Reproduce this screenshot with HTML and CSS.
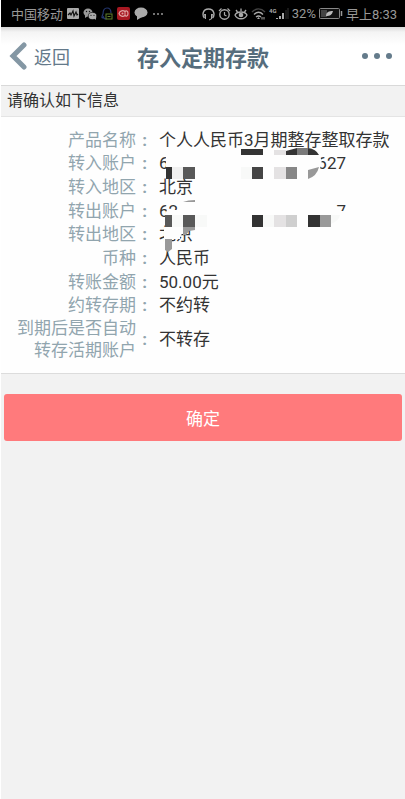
FILE: index.html
```html
<!DOCTYPE html>
<html lang="zh-CN">
<head>
    <meta charset="UTF-8">
    <meta name="viewport" content="width=device-width, initial-scale=1.0">
    <title>存入定期存款</title>
    <link rel="stylesheet" href="styles.css">
</head>
<body>
<div class="page">

    <div class="status-bar">
        <div class="status-group">
            <span>中国移动</span>
            <svg width="12" height="12" viewBox="0 0 12 12"><rect width="12" height="11" rx="1" fill="#aaa"/><path d="M1 7l2-2 1 2 2-4 1 5 2-4 1 3 1-1" fill="none" stroke="#111" stroke-width="1.2"/></svg>
            <svg width="14" height="12" viewBox="0 0 14 12"><ellipse cx="5" cy="4.5" rx="4.5" ry="4" fill="#999"/><path d="M2 7v3l3-2z" fill="#999"/><ellipse cx="9.5" cy="8" rx="4.2" ry="3.6" fill="#aaa" stroke="#000" stroke-width=".6"/><path d="M11 10l2 2v-3z" fill="#aaa"/><g fill="#111"><circle cx="3.5" cy="3.5" r=".7"/><circle cx="6.5" cy="3.5" r=".7"/><circle cx="8" cy="7.3" r=".6"/><circle cx="11" cy="7.3" r=".6"/></g></svg>
            <svg width="12" height="14" viewBox="0 0 12 14"><path d="M2 7C2 3 3.500 1 6 1s4 2 4 5M2 7c-1 2-1.500 4-.5 4l1-1c0 1 1 2 3 2" fill="none" stroke="#24366f" stroke-width="1.200"/><rect x="5" y="7" width="6" height="5" fill="#000" stroke="#61802c"/><path d="M6.500 9.500h3" stroke="#61802c"/></svg>
            <svg width="13" height="13" viewBox="0 0 13 13"><rect width="13" height="13" rx="2" fill="#a81822"/><path d="M2 6.500c1-3 4-3.500 6-2 1-1 3-1 3 2s-2 3-3 2c-2 1.500-5 1-6-2z" fill="none" stroke="#e0a5a5" stroke-width="1.200"/><circle cx="5.500" cy="6.500" r="1" fill="#e0a5a5"/><path d="M8 5v3" stroke="#e0a5a5"/></svg>
            <svg width="14" height="13" viewBox="0 0 14 13"><ellipse cx="7" cy="5.500" rx="6.500" ry="5" fill="#aaa"/><path d="M3 8v5l5-3z" fill="#aaa"/></svg>
            <svg width="12" height="12" viewBox="0 0 12 12"><g fill="#999"><circle cx="2" cy="6" r="1"/><circle cx="6" cy="6" r="1"/><circle cx="10" cy="6" r="1"/></g></svg>
        </div>
        <div class="status-group status-right">
            <svg width="13" height="14" viewBox="0 0 13 14"><path d="M2.500 11C0 8.500.5 2 6.500 2s6.500 6.500 4 9" fill="none" stroke="#aaa" stroke-width="1.400"/><path d="M2 7h2v5H3zM9 7h2l-1 5H9z" fill="#aaa"/><path d="M10 11.500L7 13" stroke="#aaa"/></svg>
            <svg width="13" height="14" viewBox="0 0 13 14"><circle cx="6.500" cy="7.500" r="4.700" fill="none" stroke="#aaa" stroke-width="1.400"/><path d="M6.500 5v3l2 1M1 4l2.500-2.500M12 4L9.500 1.500" fill="none" stroke="#aaa" stroke-width="1.200"/></svg>
            <svg width="14" height="14" viewBox="0 0 14 14"><path d="M1 8c2-4 10-4 12 0-2 5-10 5-12 0z" fill="none" stroke="#aaa" stroke-width="1.300"/><circle cx="7" cy="8" r="2.300" fill="#aaa"/><path d="M7 4V1.500M3.500 5L2 3M10.500 5L12 3" stroke="#aaa" stroke-width="1.300"/></svg>
            <svg width="15" height="14" viewBox="0 0 15 14"><g fill="none" stroke-width="1.400"><path d="M1 5c4-4 9-4 13 0" stroke="#444"/><path d="M3 7.500c3-3 6-3 9 0M5 10c2-1.500 3-1.500 5 0" stroke="#aaa"/></g><path d="M7.500 10L6 12h3z" fill="#aaa"/><path d="M11 10v2.500M13 10v2.500" stroke="#aaa"/></svg>
            <svg width="20" height="14" viewBox="0 0 20 14"><text x="0" y="6" class="network">4G</text><path d="M8 12v-1M11 12V9M14 12V6" stroke="#aaa" stroke-width="2"/><path d="M17 12V3M19 12V1" stroke="#333" stroke-width="1"/></svg>
            <span>32%</span>
            <svg width="24" height="12" viewBox="0 0 24 12"><rect x=".5" y=".5" width="20" height="10" rx="1" fill="#111" stroke="#888"/><path d="M2 2h6v7H2z" fill="#444"/><path d="M7 8c0-4 3-5 7-5-1 4-3 5-7 5z" fill="#bbb"/><path d="M22.500 3v5" stroke="#999" stroke-width="1.500"/></svg>
            <span>早上8:33</span>
        </div>
    </div>

    <header class="header">
        <button class="back" type="button">
            <svg width="18" height="28" viewBox="0 0 18 28"><path d="M15 3L4 14l11 11" fill="none" stroke="#8497a4" stroke-width="5" stroke-linecap="round" stroke-linejoin="miter"/></svg>
            <span>返回</span>
        </button>
        <h1 class="title">存入定期存款</h1>
        <button class="more" type="button" aria-label="更多">
            <svg width="32" height="8" viewBox="0 0 32 8"><g fill="#647b8b"><circle cx="4" cy="4" r="3"/><circle cx="16" cy="4" r="3"/><circle cx="28" cy="4" r="3"/></g></svg>
        </button>
    </header>

    <h2 class="notice">请确认如下信息</h2>

    <main>
        <div class="card">
            <dl class="details">
                <dt>产品名称</dt><dd>个人人民币3月期整存整取存款</dd>
                <dt>转入账户</dt><dd class="account"><span>6</span><span>627</span></dd>
                <dt>转入地区</dt><dd>北京</dd>
                <dt>转出账户</dt><dd class="account"><span>62</span><span>7</span></dd>
                <dt>转出地区</dt><dd>北京</dd>
                <dt>币种</dt><dd>人民币</dd>
                <dt>转账金额</dt><dd>50.00元</dd>
                <dt>约转存期</dt><dd>不约转</dd>
                <dt>到期后是否自动<br>转存活期账户</dt><dd>不转存</dd>
            </dl>

            <!-- mosaic over the account numbers -->
            <svg class="mosaic" width="200" height="112" viewBox="0 0 200 112" aria-hidden="true">
                <path fill="#fefefe" d="M16 9h153q4 5 2 11-3 9-11 13H16zM17 64h10l6-8h120v9h45v16H15V68zM14 81h19v5l-3 5v2h-8v8h-8z"/>
                <path fill="#343434" d="M91 3h22v6H91zM136 5l11-3v7h-11zM158 2q8 1 11 7h-11z"/>
                <path fill="#7a7a7a" d="M147 2h11v7h-11z"/>
                <path fill="#e4e2e3" d="M124 4h12v5h-12zM124 21h12v12h-12zM124 69h12v12h-12z"/>
                <path fill="#333" d="M16 21h6v12h-6zM102 69h11v12h-11zM158 69h12v12h-12z"/>
                <path fill="#f0f0f0" d="M22 21h11v12H22z"/>
                <path fill="#595959" d="M33 21h12v12H33zM15 69h7v12h-7zM33 69h12v12H33z"/>
                <path fill="#454545" d="M102 21h11v12h-11z"/>
                <path fill="#878787" d="M136 21h11v12h-11z"/>
                <path fill="#999" d="M158 33V24l11-3q-2 9-11 12zM33 56q5-2 12-2v2zM170 69h11v12h-11zM33 81h12v3l-6 1-3 4h-3zM15 93h7v10l-4 3-3-2z"/>
                <path fill="#cfcfcf" d="M136 69h11v12h-11z"/>
                <path fill="#f8f9f8" d="M91 21h11v12H91zM22 69h11v12H22zM45 69h12v12H45zM113 69h11v12h-11zM181 69h9q-1 6-9 9z"/>
            </svg>
        </div>

        <button class="confirm" type="button">确定</button>
    </main>

</div>
</body>
</html>
```
FILE: styles.css
```css
/* General Reset */
* {
    box-sizing: border-box;
}

body {
    margin: 0;
    background: #f2f2f2;
    color: #333;
    font-family: Roboto, "Noto Sans CJK SC", sans-serif;
}

h1, h2, dl, dt, dd {
    margin: 0;
    font-weight: normal;
}

button {
    border: none;
    padding: 0;
    background: none;
    font-family: inherit;
    cursor: pointer;
}

.page {
    min-height: 100vh;
    border-left: 1px solid #fff;
}

/* Phone status bar */
.status-bar {
    display: flex;
    justify-content: space-between;
    align-items: center;
    height: 27px;
    padding: 0 8px 0 10px;
    background: #000;
    color: #999;
    font-size: 13px;
    white-space: nowrap;
}

.status-group {
    display: flex;
    align-items: center;
    gap: 4px;
}

.status-right {
    gap: 3px;
}

.network {
    fill: #aaa;
    font-size: 6px;
    font-weight: bold;
}

/* Header */
.header {
    display: grid;
    grid-template-columns: 1fr auto 1fr;
    align-items: center;
    height: 59px;
    padding: 0 8px;
    background: linear-gradient(#d8d8d8, #f4f4f4 5px, #fff 18px);
    border-bottom: 1px solid #d9d9d9;
}

.back {
    display: flex;
    align-items: center;
    justify-self: start;
    gap: 7px;
    color: #64798a;
    font-size: 18px;
}

.title {
    color: #566d7d;
    font-size: 22px;
    font-weight: bold;
}

.more {
    display: flex;
    justify-self: end;
    padding: 4px;
}

.notice {
    padding: 0 6px;
    border-bottom: 1px solid #e4e4e4;
    font-size: 16px;
    line-height: 30px;
}

/* Deposit details */
.card {
    position: relative;
    padding: 11px 8px 12px 12px;
    background: #fefefe;
    border-bottom: 1px solid #dcdcdc;
}

.details {
    display: grid;
    grid-template-columns: 134px 1fr;
    grid-template-rows: repeat(8, 1fr) 44px;
    column-gap: 12px;
    align-items: center;
    min-height: 233px;
    font-size: 17px;
    line-height: 22px;
}

dt {
    display: flex;
    align-items: center;
    justify-content: flex-end;
    gap: 5px;
    color: #91a5ae;
    text-align: right;
}

dt::after {
    content: ":";
    width: 6px;
    font-weight: bold;
}

dd {
    white-space: nowrap;
}

.account {
    display: flex;
    justify-content: space-between;
    width: 187px;
}

.mosaic {
    position: absolute;
    top: 29px;
    left: 149px;
}

.confirm {
    display: block;
    width: calc(100% - 6px);
    height: 47px;
    margin: 20px 3px;
    border-radius: 3px;
    background: #ff7a7c;
    color: #fff;
    font-size: 17px;
}
```
